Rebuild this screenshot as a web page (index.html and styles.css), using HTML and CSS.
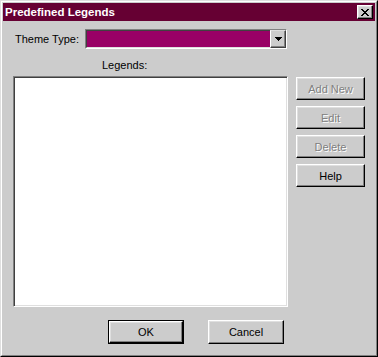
FILE: index.html
```html
<html lang="en">
<head>
  <link rel="stylesheet" href="styles.css">
</head>
<body>
  <div class="ventana">
    <div class="marco">
      <div class="titulo">
        <span>Predefined Legends</span>
        <div class="cerrar">
          <svg width="8" height="7" viewBox="0 0 8 7" shape-rendering="crispEdges">
            <path d="M0 0h2v1h-2zM6 0h2v1h-2zM1 1h2v1h-2zM5 1h2v1h-2zM2 2h4v1h-4zM3 3h2v1h-2zM2 4h4v1h-4zM1 5h2v1h-2zM5 5h2v1h-2zM0 6h2v1h-2zM6 6h2v1h-2z" fill="#000"/>
          </svg>
        </div>
      </div>

      <div class="contenido">
        <div class="fila-tema">
          <label class="etiqueta">Theme Type:</label>
          <div class="combo">
            <div class="combo-campo"></div>
            <div class="combo-boton">
              <svg width="7" height="4" viewBox="0 0 7 4" shape-rendering="crispEdges">
                <path d="M0 0h7v1h-7zM1 1h5v1h-5zM2 2h3v1h-3zM3 3h1v1h-1z" fill="#000"/>
              </svg>
            </div>
          </div>
        </div>

        <div class="rotulo">Legends:</div>

        <div class="principal">
          <div class="lista"></div>
          <div class="botones">
            <div class="boton apagado">Add New</div>
            <div class="boton apagado">Edit</div>
            <div class="boton apagado">Delete</div>
            <div class="boton">Help</div>
          </div>
        </div>

        <div class="pie">
          <div class="boton defecto"><div class="boton">OK</div></div>
          <div class="boton ancho">Cancel</div>
        </div>
      </div>
    </div>
  </div>
</body>
</html>
```

FILE: styles.css
```css
body {
    margin: 0;
    background-color: #cccccc;
    font-family: "Liberation Sans", Arial, sans-serif;
    font-size: 11px;
    color: #000000;
}

.ventana {
    width: 378px;
    height: 357px;
    box-sizing: border-box;
    border: 1px solid;
    border-color: #dfdfdf #000000 #000000 #dfdfdf;
    background-color: #cccccc;
}

.marco {
    height: 100%;
    box-sizing: border-box;
    border: 1px solid;
    border-color: #ffffff #808080 #808080 #ffffff;
    padding: 1px;
}

.titulo {
    height: 18px;
    background-color: #660033;
    color: #ffffff;
    font-weight: bold;
    font-size: 11.5px;
    display: flex;
    align-items: center;
    justify-content: space-between;
    padding: 0 2px 0 2px;
}

.cerrar {
    width: 16px;
    height: 14px;
    box-sizing: border-box;
    background-color: #cccccc;
    border: 1px solid;
    border-color: #ffffff #000000 #000000 #ffffff;
    box-shadow: inset -1px -1px 0 #808080, inset 1px 1px 0 #dfdfdf;
    display: flex;
    align-items: center;
    justify-content: center;
}

.contenido {
    padding: 0 0 0 10px;
}

.fila-tema {
    display: flex;
    align-items: center;
    margin-top: 8px;
}

.etiqueta {
    width: 70px;
    padding-left: 2px;
}

.combo {
    width: 202px;
    height: 20px;
    box-sizing: border-box;
    border: 1px solid;
    border-color: #808080 #ffffff #ffffff #808080;
    display: flex;
}

.combo-campo {
    flex: 1;
    background-color: #990066;
    border-top: 1px solid #404040;
    border-left: 1px solid #404040;
    border-bottom: 1px solid #dfdfdf;
}

.combo-boton {
    width: 16px;
    box-sizing: border-box;
    background-color: #cccccc;
    border: 1px solid;
    border-color: #dfdfdf #404040 #404040 #ffffff;
    box-shadow: inset -1px -1px 0 #808080;
    display: flex;
    align-items: center;
    justify-content: center;
}

.rotulo {
    height: 22px;
    line-height: 22px;
    padding: 5px 0 0 89px;
}

.principal {
    display: flex;
    gap: 8px;
}

.lista {
    width: 275px;
    height: 231px;
    box-sizing: border-box;
    background-color: #ffffff;
    border: 1px solid;
    border-color: #808080 #ffffff #ffffff #808080;
    box-shadow: inset 1px 1px 0 #404040, inset -1px -1px 0 #dfdfdf;
}

.botones {
    display: flex;
    flex-direction: column;
    gap: 6px;
    margin-top: 1px;
}

.boton {
    width: 69px;
    height: 23px;
    box-sizing: border-box;
    border: 1px solid;
    border-color: #ffffff #000000 #000000 #ffffff;
    box-shadow: inset -1px -1px 0 #808080, inset 1px 1px 0 #dfdfdf;
    display: flex;
    align-items: center;
    justify-content: center;
}

.apagado {
    color: #808080;
    text-shadow: 1px 1px 0 #ffffff;
}

.pie {
    display: flex;
    gap: 24px;
    margin-top: 13px;
    padding-left: 95px;
}

.ancho {
    width: 76px;
    height: 24px;
}

.defecto {
    width: 76px;
    height: 24px;
    border: 1px solid #000000;
    box-shadow: none;
}

.defecto .boton {
    width: 74px;
    height: 22px;
}
```
